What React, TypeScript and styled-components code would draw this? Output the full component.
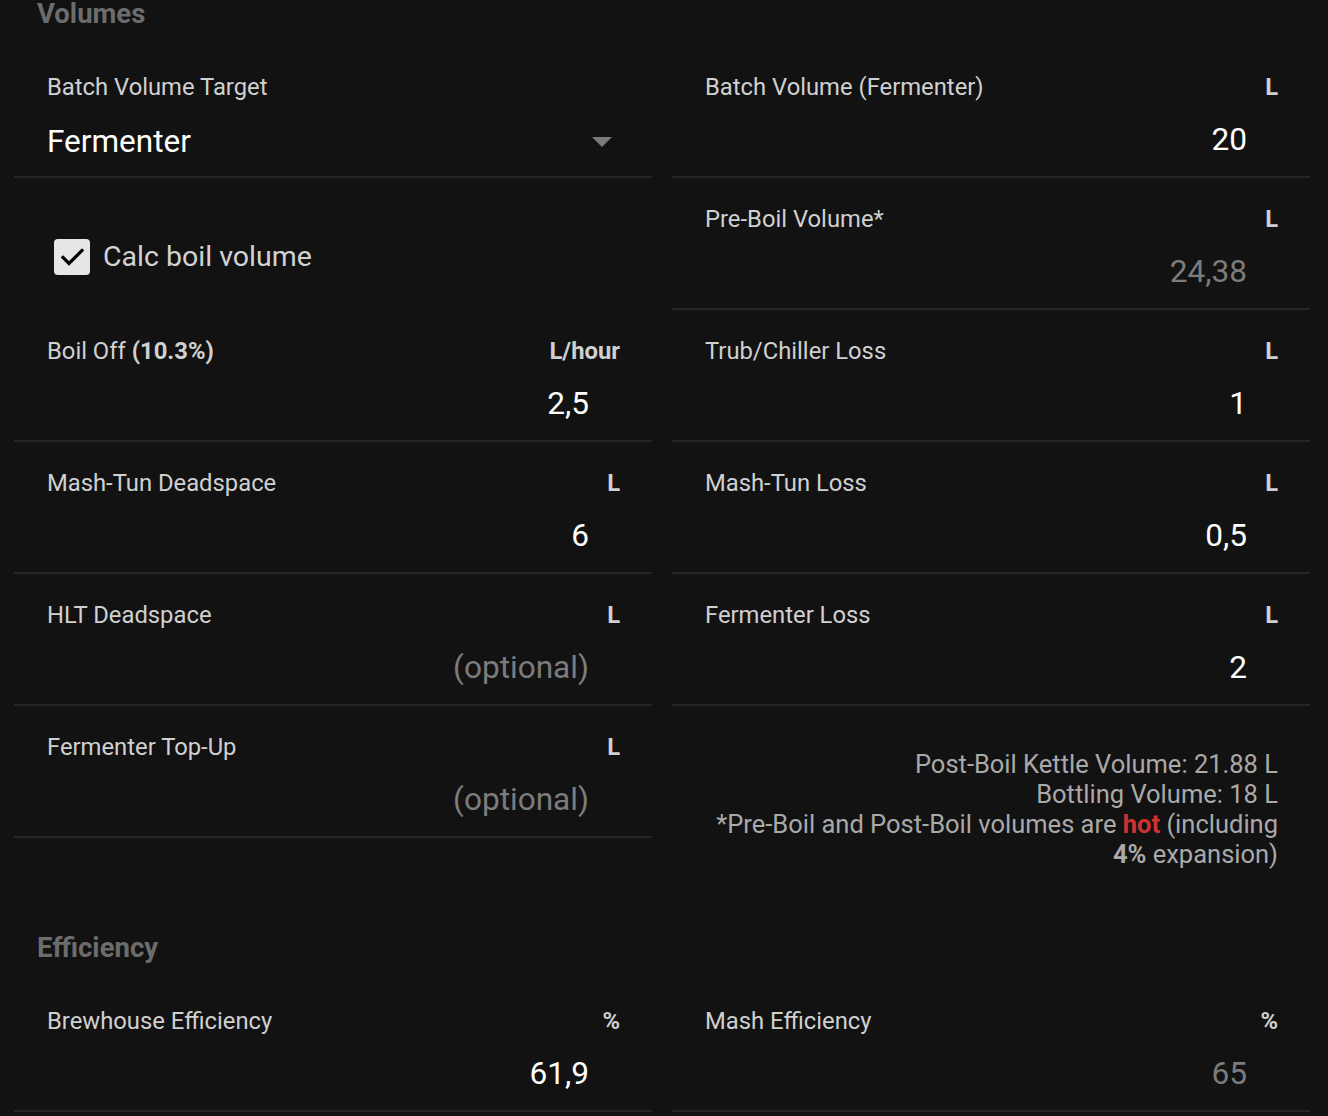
import React from "react";
import styled, { createGlobalStyle } from "styled-components";

const GlobalStyle = createGlobalStyle`
  html, body {
    margin: 0;
    padding: 0;
    background: #121212;
  }
  body {
    font-family: Roboto, "Noto Sans", "Liberation Sans", sans-serif;
    color: #d2d2d2;
  }
`;

const Page = styled.div`
  width: 1328px;
  min-height: 1116px;
  background: #121212;
  padding: 0 18px 0 14px;
  box-sizing: border-box;
  overflow: hidden;
`;

const Section = styled.section<{ $gapTop?: number }>`
  display: flex;
  flex-direction: column;
  margin-top: ${(p) => p.$gapTop ?? 0}px;
`;

const Heading = styled.h2`
  margin: 0 0 18px 23px;
  font-size: 27.5px;
  line-height: 28px;
  font-weight: 700;
  color: #6c6c6c;
`;

const Columns = styled.div`
  display: grid;
  grid-template-columns: 638px 638px;
  column-gap: 20px;
  align-items: start;
`;

const Column = styled.div`
  display: flex;
  flex-direction: column;
`;

const Row = styled.div`
  height: 132px;
  box-sizing: border-box;
  padding: 26px 32px 0 33px;
  border-bottom: 2px solid #262626;
  display: flex;
  flex-direction: column;
`;

const RowHeader = styled.div`
  display: flex;
  justify-content: space-between;
  align-items: center;
  height: 30px;
`;

const Label = styled.span`
  font-size: 23.8px;
  line-height: 30px;
  color: #d0d0d0;
  b {
    font-weight: 700;
  }
`;

const Unit = styled.span`
  font-size: 23.8px;
  line-height: 30px;
  font-weight: 700;
  color: #cfcfcf;
`;

const ValueLine = styled.div`
  margin-top: 18px;
  height: 40px;
  display: flex;
  justify-content: flex-end;
  align-items: center;
  padding-right: 31px;
`;

const Value = styled.span<{ $muted?: boolean }>`
  font-size: 31.6px;
  line-height: 40px;
  color: ${(p) => (p.$muted ? "#7c7c7c" : "#ffffff")};
`;

const SelectLine = styled.div`
  margin-top: 20px;
  height: 40px;
  display: flex;
  justify-content: space-between;
  align-items: center;
  padding-right: 8px;
`;

const SelectText = styled.span`
  font-size: 31.5px;
  line-height: 40px;
  color: #ffffff;
`;

const CheckRow = styled.label`
  height: 132px;
  box-sizing: border-box;
  padding: 26px 32px 0 40px;
  display: flex;
  align-items: center;
  gap: 13px;
`;

const CheckBox = styled.span`
  width: 36px;
  height: 36px;
  border-radius: 4px;
  background: #e6e6e6;
  display: flex;
  align-items: center;
  justify-content: center;
  flex-shrink: 0;
`;

const CheckText = styled.span`
  font-size: 28.5px;
  line-height: 36px;
  color: #d2d2d2;
`;

const Info = styled.div`
  padding: 43px 32px 0 33px;
  text-align: right;
  font-size: 25.5px;
  line-height: 30px;
  color: #a9a9a9;
  b {
    font-weight: 700;
  }
`;

const Hot = styled.b`
  color: #d03232;
`;

type FieldProps = {
  label: React.ReactNode;
  unit: string;
  value: string;
  muted?: boolean;
};

const Field = ({ label, unit, value, muted }: FieldProps) => (
  <Row>
    <RowHeader>
      <Label>{label}</Label>
      <Unit>{unit}</Unit>
    </RowHeader>
    <ValueLine>
      <Value $muted={muted}>{value}</Value>
    </ValueLine>
  </Row>
);

const ArrowDown = () => (
  <svg width="20" height="10" viewBox="0 0 20 10">
    <path d="M0 0 L20 0 L10 10 Z" fill="#7a7a7a" />
  </svg>
);

const CheckMark = () => (
  <svg width="28" height="28" viewBox="0 0 28 28">
    <path
      d="M5 14.5 L11 20.5 L24 7.5"
      fill="none"
      stroke="#000"
      strokeWidth="3.2"
      strokeLinecap="square"
    />
  </svg>
);

export default function App() {
  return (
    <>
      <GlobalStyle />
      <Page>
        <Section>
          <Heading>Volumes</Heading>
          <Columns>
            <Column>
              <Row>
                <RowHeader>
                  <Label>Batch Volume Target</Label>
                </RowHeader>
                <SelectLine>
                  <SelectText>Fermenter</SelectText>
                  <ArrowDown />
                </SelectLine>
              </Row>
              <CheckRow>
                <CheckBox>
                  <CheckMark />
                </CheckBox>
                <CheckText>Calc boil volume</CheckText>
              </CheckRow>
              <Field
                label={
                  <>
                    Boil Off <b>(10.3%)</b>
                  </>
                }
                unit="L/hour"
                value="2,5"
              />
              <Field label="Mash-Tun Deadspace" unit="L" value="6" />
              <Field label="HLT Deadspace" unit="L" value="(optional)" muted />
              <Field label="Fermenter Top-Up" unit="L" value="(optional)" muted />
            </Column>
            <Column>
              <Field label="Batch Volume (Fermenter)" unit="L" value="20" />
              <Field label="Pre-Boil Volume*" unit="L" value="24,38" muted />
              <Field label="Trub/Chiller Loss" unit="L" value="1" />
              <Field label="Mash-Tun Loss" unit="L" value="0,5" />
              <Field label="Fermenter Loss" unit="L" value="2" />
              <Info>
                Post-Boil Kettle Volume: 21.88 L
                <br />
                Bottling Volume: 18 L
                <br />
                *Pre-Boil and Post-Boil volumes are <Hot>hot</Hot> (including
                <br />
                <b>4%</b> expansion)
              </Info>
            </Column>
          </Columns>
        </Section>
        <Section $gapTop={65}>
          <Heading>Efficiency</Heading>
          <Columns>
            <Column>
              <Field label="Brewhouse Efficiency" unit="%" value="61,9" />
            </Column>
            <Column>
              <Field label="Mash Efficiency" unit="%" value="65" muted />
            </Column>
          </Columns>
        </Section>
      </Page>
    </>
  );
}
